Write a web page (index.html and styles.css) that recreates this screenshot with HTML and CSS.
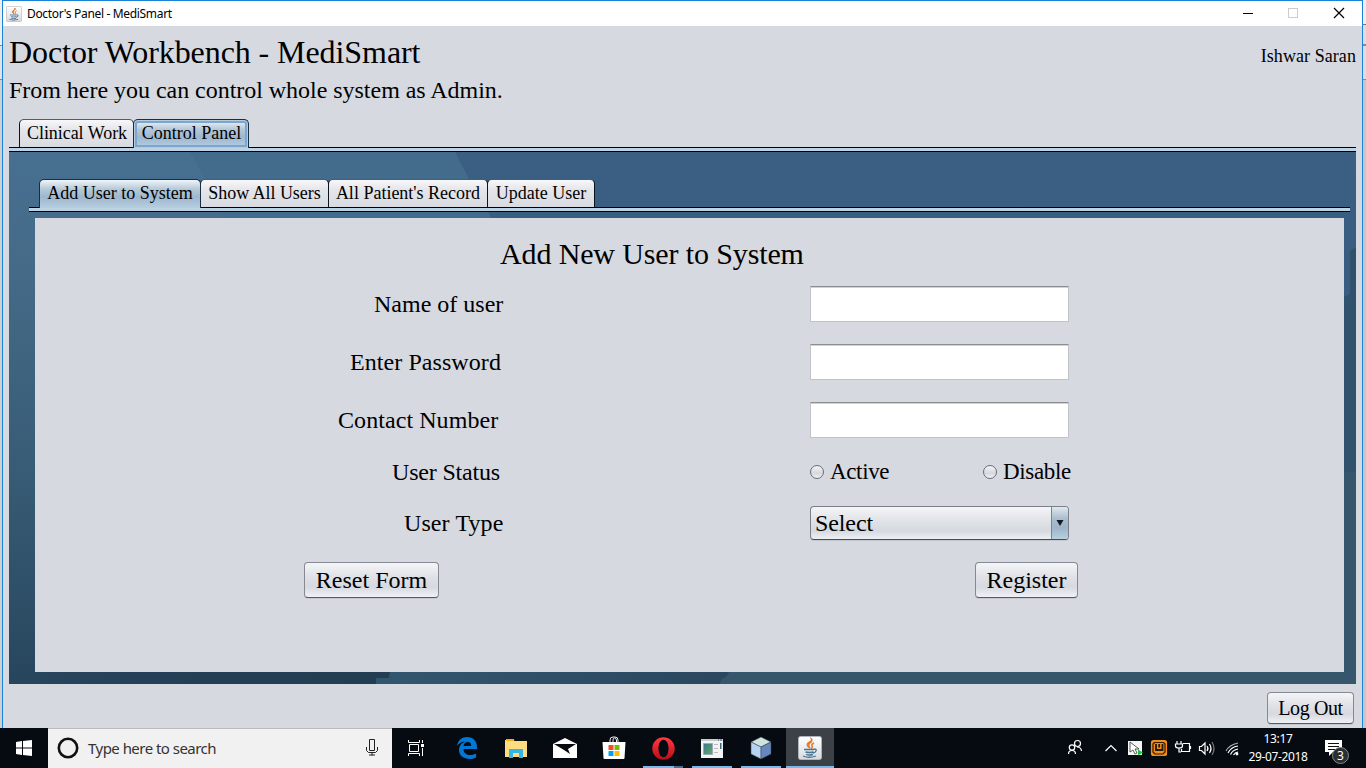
FILE: index.html
```html
<!DOCTYPE html>
<html lang="en">
<head>
<meta charset="utf-8">
<title>Doctor's Panel - MediSmart</title>
<link rel="stylesheet" href="styles.css">
</head>
<body>
<div class="screen">
  <div class="desk">
    <div class="edge edge-left"></div>
    <div class="window">
      <header class="titlebar">
        <svg class="app-icon" viewBox="0 0 24 24"><use href="#java"/></svg>
        <span class="caption">Doctor's Panel - MediSmart</span>
        <svg class="controls" width="110" height="24" viewBox="0 0 110 24" fill="none" shape-rendering="crispEdges"><path d="M1 12.500h10" stroke="#000"/><path d="M46.500 7.500h9v9h-9z" stroke="#ccc"/><path d="M92 7l10 10M102 7l-10 10" stroke="#000" stroke-width="1.200" shape-rendering="auto"/></svg>
      </header>
      <div class="heading">
        <div><h1>Doctor Workbench - MediSmart</h1><p>From here you can control whole system as Admin.</p></div>
        <span class="user">Ishwar Saran</span>
      </div>
      <nav class="tabs outer">
        <span class="tab clinical">Clinical Work</span><span class="tab selected focused control">Control Panel</span>
      </nav>
      <main class="panel">
        <svg class="shapes" width="1347" height="532" viewBox="0 0 1347 532"><defs><linearGradient id="left" x1="0" y1="0" x2="0" y2="1"><stop stop-color="#476f90"/><stop offset=".2" stop-color="#456b89"/><stop offset=".6" stop-color="#385c75"/><stop offset="1" stop-color="#27465d"/></linearGradient><linearGradient id="base"><stop stop-color="#27465d"/><stop offset=".5" stop-color="#243e56"/><stop offset="1" stop-color="#233d52"/></linearGradient><linearGradient id="mid"><stop stop-color="#33566f"/><stop offset="1" stop-color="#2a475f"/></linearGradient></defs>
        <path d="M0 0H446Q458 26 476 54L482 66H30V532H0z" fill="url(#left)"/><path d="M181 0Q200 30 215 66H482Q458 30 446 0z" fill="#436b8b"/><path d="M0 520H381l-1 6h-13v6H0z" fill="url(#base)"/><path d="M381 520H720q-2 6-5 6t-4 6H367v-6h13z" fill="url(#mid)"/><path d="M720 520H1347v12H711q1-5 4-6t5-6z" fill="#36566b"/><path d="M1335 145l6-3v-43l6-4v437h-12z" fill="#31526c"/><path d="M1335 320h12v212h-12z" fill="#35566c"/></svg>
        <nav class="tabs inner">
          <span class="tab selected add">Add User to System</span><span class="tab show">Show All Users</span><span class="tab record">All Patient's Record</span><span class="tab update">Update User</span>
        </nav>
        <form class="form">
          <h2>Add New User to System</h2>
          <div class="row"><label class="l-name">Name of user</label><span class="field"></span></div>
          <div class="row"><label class="l-pass">Enter Password</label><span class="field"></span></div>
          <div class="row"><label class="l-contact">Contact Number</label><span class="field"></span></div>
          <div class="row status"><label class="l-status">User Status</label><div class="radios"><span class="radio"><i></i>Active</span><span class="radio"><i></i>Disable</span></div></div>
          <div class="row type"><label class="l-type">User Type</label><div class="select"><span>Select</span><b><svg width="8" height="8" viewBox="0 0 8 8"><path d="M.5 1h7L4 7z" fill="#17191d"/></svg></b></div></div>
          <div class="actions"><span class="button reset">Reset Form</span><span class="button register">Register</span></div>
        </form>
      </main>
      <footer><span class="button logout">Log Out</span></footer>
    </div>
    <div class="edge edge-right"></div>
  </div>
  <div class="taskbar">
    <div class="start"><svg width="16" height="16" viewBox="0 0 16 16"><path d="M0 2l6-1v6.500H0zM7 1l9-1v7.500H7zM0 8.500h6V15l-6-1zM7 8.500h9V16l-9-1z" fill="#fff"/></svg></div>
    <div class="search">
      <svg width="22" height="22" viewBox="0 0 22 22"><circle cx="11" cy="11" r="9.200" fill="none" stroke="#111" stroke-width="2.600"/></svg>
      <span>Type here to search</span>
      <svg class="mic" width="12" height="17" viewBox="0 0 12 17" fill="none" stroke="#222"><path d="M3.500.5h5v11h-5zM.5 8v3.500l2 2h7l2-2V8M6 13.500v3M3 16h6"/></svg>
    </div>
    <div class="task view"><svg width="18" height="18" viewBox="0 0 18 18" fill="none" stroke="#fff"><path d="M2.500 5.500h9v7h-9zM1.500 1v2.500h11V1M1.500 17v-2.500h11V17M15.500 1v3M15.500 9v8"/><path d="M14 5h3v3h-3z" fill="#fff" stroke="none"/></svg></div>
    <div class="task"><svg width="22" height="22" viewBox="0 0 22 22"><path d="M1 9C2 3 6 0 11 0c6 0 10 4 10 10v2H7.500c0 4 3 6 7 6 2 0 4-.6 5.500-1.500v4C18 21.500 16 22 13.500 22 7.500 22 3 18.500 3 13c0-4 2.500-7 6-8.500C6 4.500 3 6 1 9zm6.500 0h7.700c0-2.500-1.200-4-3.500-4S8 6.500 7.500 9z" fill="#0078d7"/></svg></div>
    <div class="task"><svg width="22" height="19" viewBox="0 0 22 19"><path d="M0 1h8l2 1h12v16H0z" fill="#fedc80"/><path d="M1 0h8v2H1z" fill="#f1ae1d"/><path d="M4 10h14v9h-4v-5H8v5H4z" fill="#36b5e8"/></svg></div>
    <div class="task"><svg width="24" height="20" viewBox="0 0 24 20"><path d="M0 6l12-6 12 6v14H0z" fill="#fff"/><path d="M1 6h22l-8 5 2 5-6-4z" fill="#060b12"/></svg></div>
    <div class="task"><svg width="24" height="24" viewBox="0 0 24 24"><path d="M8 7V4q0-3 3-3h2q3 0 3 3v3M11 6V4q0-2 1.500-2t2 2v2" fill="none" stroke="#eee"/><path d="M.5 6h23l-1 16q0 1-1 1h-19q-1 0-1-1z" fill="#fff"/><path d="M6.500 9h5v5h-5z" fill="#f25022"/><path d="M12.500 9h5v5h-5z" fill="#7fba00"/><path d="M6.500 15h5v5h-5z" fill="#00a4ef"/><path d="M12.500 15h5v5h-5z" fill="#ffb900"/></svg></div>
    <div class="task running opera"><svg width="23" height="23" viewBox="0 0 23 23"><defs><linearGradient id="op" x1="0" y1="0" x2="0" y2="1"><stop stop-color="#ff3a43"/><stop offset="1" stop-color="#b80d19"/></linearGradient></defs><path fill="url(#op)" fill-rule="evenodd" d="M11.500.3a11.200 11.200 0 1 0 0 22.400 11.200 11.200 0 0 0 0-22.400zm0 2.500c3 0 5 3.700 5 8.700s-2 8.700-5 8.700-5-3.700-5-8.700 2-8.700 5-8.700z"/></svg></div>
    <div class="task running"><svg width="22" height="19" viewBox="0 0 22 19"><defs><linearGradient id="gr" x1="0" y1="0" x2="1" y2="1"><stop stop-color="#3c7793"/><stop offset="1" stop-color="#60ab5d"/></linearGradient></defs><path d="M0 0h22v19H0z" fill="#f3f3f3"/><path d="M0 0h22v2H0z" fill="#c5cbd1"/><path d="M17 1h1m1 0h2" stroke="#456"/><path d="M2.500 4.500h9v11h-9z" fill="url(#gr)" stroke="#9ab"/><path d="M13 5.500h4m-4 4h4m-4 4h4" stroke="#bbb"/><path d="M19 4h1.500v6H19z" fill="#386d86"/></svg></div>
    <div class="task running"><svg width="22" height="23" viewBox="0 0 22 23" stroke="#345" stroke-width=".5"><path d="M1 5l10-5 10 5-10 5z" fill="#cfe4df"/><path d="M1 5l10 5v12L1 17z" fill="#b7d3f0"/><path d="M21 5l-10 5v12l10-5z" fill="#6688bd"/></svg></div>
    <div class="task running active"><svg width="24" height="24" viewBox="0 0 24 24"><defs><linearGradient id="jg" x1="0" y1="0" x2="0" y2="1"><stop stop-color="#fff"/><stop offset="1" stop-color="#d7dade"/></linearGradient></defs><g id="java"><rect x=".5" y=".5" width="23" height="23" rx="2" fill="url(#jg)" stroke="#aeb5bc"/><path d="M13.500 3q1 2-1.500 4t0 5q-5-3-1-5.500T13.500 3zM16 7q-3 1.500-2 3t-1 3" fill="none" stroke="#e77b2c" stroke-width="1.500"/><path d="M6 13.500h10M7.500 16q4 1 8 0M16 13q3 0 2 2t-3 2M8 18.500q3 1 7 0M5 20q6 2.500 13 0" fill="none" stroke="#487493" stroke-width="1.300"/></g></svg></div>
    <div class="tray">
      <svg width="180" height="40" viewBox="1065 728 180 40" fill="none" stroke="#fff" stroke-width="1.200"><circle cx="1077.500" cy="743.500" r="3"/><circle cx="1072" cy="747.500" r="2.700"/><path d="M1068.500 754q0-3.500 3.500-3.500t3.500 3.500M1077 747q4 0 4.500 4M1105.500 751l5.500-5.500 5.500 5.500"/>
      <rect x="1128" y="741" width="14" height="14" fill="#f5f5f5" stroke="none"/><path d="M1130 742l9 7-4 0 2 4-2 1-2-4-3 2z" fill="#fff" stroke="#333" stroke-width=".8"/><path d="M1138 749.500l5 3-5 3z" fill="#16c637" stroke="none"/>
      <rect x="1151.500" y="740.500" width="15" height="15" rx="2" fill="#f28b18" stroke="#f58c16"/><path d="M1154.500 742.500h9l1.500 1.500v8l-2 2h-8l-2-2v-8z" stroke="#301b04"/><path d="M1156 744v6h6.500v-6M1159.200 744v3.500" stroke="#241808" stroke-width="1.800"/>
      <path d="M1183 743.500h6.500v8h-8V749M1190.500 746v3M1177 741v3M1181 741v3M1175.500 744h7v2q0 2-3.500 2t-3.500-2zM1179 748v4h2"/>
      <path d="M1199.500 746.500h2l3.500-3.500v11l-3.500-3.500h-2zM1207 746q2 2.500 0 5M1209.500 744q3 4.500 0 9"/><path d="M1212 742q4 6.500 0 13" stroke="#777"/>
      <path d="M1226 751q3-6 12-8" stroke="#aaa"/><path d="M1228 753q3-6 10-7M1230.500 754.500q2-4.500 7.500-5.500M1233.500 755q1.500-2.500 4.500-3"/><circle cx="1237" cy="754" r="1.400" fill="#fff" stroke="none"/></svg>
      <div class="clock"><span>13:17</span><span>29-07-2018</span></div>
      <div class="notice"><svg width="17" height="16" viewBox="0 0 17 16"><path d="M0 0h17v12H8l-4 4v-4H0z" fill="#fff"/><path d="M3 3.500h11M3 6.500h11M3 9.500h8" stroke="#111"/></svg><span class="badge">3</span></div>
    </div>
  </div>
</div>
</body>
</html>
```
FILE: styles.css
```css
*, *::after { box-sizing: border-box; }
body { margin: 0; }
.screen { width: 1366px; height: 768px; overflow: hidden; background: #d6d9e0; font-family: "Liberation Serif", "Times New Roman", serif; color: #000; }
.desk { display: flex; height: 728px; }
.edge-left { width: 2px; background: linear-gradient(#eee 45px, #888 45px 46px, #e2e2e2 46px 79px, #888 79px 80px, #d0d0d0 80px); }
.edge-right { width: 3px; background: linear-gradient(#eee 24px, #777 24px 25px, #ddd 25px 44px, #888 44px 46px, #ddd 46px 79px, #888 79px 80px, #c6c6c6 80px); }
.window { width: 1361px; border: 1px solid #1883d7; border-bottom: 0; background: #d6d9e0; }
.titlebar { display: flex; align-items: center; height: 25px; padding-left: 3px; background: #fff; font: 12px "Noto Sans", sans-serif; }
.app-icon { width: 16px; height: 16px; }
.caption { margin-left: 5px; letter-spacing: -.33px; }
.controls { margin-left: auto; margin-right: 10px; position: relative; top: -1px; }
.heading { display: flex; justify-content: space-between; height: 93px; padding: 9px 6px 0; }
h1, h2, p { margin: 0; font-weight: 400; white-space: nowrap; }
h1 { font-size: 32px; line-height: 34px; letter-spacing: -.08px; }
p { margin-top: 8px; font-size: 24px; line-height: 27px; letter-spacing: -.03px; }
.user { padding-top: 11px; font-size: 18px; line-height: 21px; letter-spacing: .07px; }
.tabs { display: flex; align-items: flex-start; position: relative; font-size: 18px; line-height: 26px; }
.tabs::after { content: ""; position: absolute; z-index: 1; left: 0; right: 0; bottom: 0; height: 5px; border-top: 1px solid #000; border-bottom: 1px solid #000; background: #bdd3e3; }
.outer { height: 33px; margin: 0 6px; padding-left: 10px; }
.tab { height: 29px; text-align: center; white-space: nowrap; border: 1px solid #555b64; border-left-color: #0b1521; border-right-color: #0b1521; border-radius: 5px 5px 0 0; background: linear-gradient(#f8f8fa, #e5e6ea 35%, #d8dbe1); }
.tab + .tab { margin-left: -1px; }
.selected { position: relative; z-index: 2; border-bottom: 0; border-color: #1b2e3f; background: linear-gradient(#f0f6fa, #b7c9d8 32%, #9fb7ce 60%, #b6cee0); }
.focused { box-shadow: inset 0 0 0 1px #b8cbda, inset 0 0 0 3px #7ba6d2; }
.clinical { width: 115px; letter-spacing: -.05px; padding-left: 1px; }
.control { width: 116px; padding-left: 1px; }
.panel { position: relative; width: 1347px; height: 532px; margin-left: 6px; padding: 27px 6px 12px 20px; background: linear-gradient(#3a5f82, #385c7f 45%, #31536e); }
.shapes { position: absolute; left: 0; top: 0; }
.inner { height: 33px; padding-left: 10px; line-height: 27px; }
.add { width: 162px; }
.show { width: 129px; letter-spacing: -.05px; }
.record { width: 160px; }
.update { width: 108px; }
.form { position: relative; width: 1309px; height: 454px; margin: 6px 0 0 6px; padding: 18px 0 0; background: #d6d9e0; font-size: 24px; }
h2 { padding-left: 465px; font-size: 30px; line-height: 35px; letter-spacing: -.13px; }
.row { display: flex; align-items: center; height: 36px; margin-bottom: 22px; padding-left: 303px; line-height: 28px; }
h2 + .row { margin-top: 15px; }
.row label { width: 472px; white-space: nowrap; }
.l-name { padding-left: 36px; }
.l-pass { padding-left: 12px; letter-spacing: .07px; }
.l-contact { letter-spacing: .07px; }
.l-status { padding-left: 54px; letter-spacing: -.18px; }
.l-type { padding-left: 66px; letter-spacing: .1px; }
.field { width: 259px; height: 36px; border: 1px solid #c0c3c9; border-top-color: #8c8e92; background: #fff; box-shadow: inset 0 1px #d0d2d5; }
.status { height: 28px; margin-top: -2px; }
.radios { display: flex; font-size: 23px; letter-spacing: -.35px; }
.radio { display: flex; align-items: center; width: 173px; }
.radio i { width: 14px; height: 14px; margin-right: 6px; border: 1px solid #686c74; border-radius: 50%; background: linear-gradient(#f4f5f7, #d5d8de 60%, #f0f2f5); }
.type { height: 34px; margin-top: -2px; }
.select { display: flex; justify-content: space-between; width: 259px; height: 34px; border: 1px solid #7a7f88; border-bottom-color: #434c57; border-radius: 4px; overflow: hidden; background: linear-gradient(#f5f5f8, #e0e2e7 45%, #d6d9df 75%, #eceff4); padding-left: 4px; line-height: 33px; letter-spacing: -.1px; box-shadow: 0 1px #c3c7ce; }
.select b { display: flex; align-items: center; justify-content: center; width: 17px; border-left: 1px solid #6e889d; background: linear-gradient(#dfe8ef, #abbfcf 35%, #9db4ca 65%, #b9d0df); }
.actions { display: flex; justify-content: space-between; width: 774px; margin-left: 269px; }
.button { display: block; border: 1px solid #858a92; border-bottom-color: #555b64; border-radius: 4px; text-align: center; background: linear-gradient(#f5f5f8, #e0e2e7 40%, #d6d9df 70%, #eff1f6); box-shadow: 0 1px #c5c8cf; }
.actions .button { height: 36px; line-height: 35px; }
.reset { width: 135px; }
.register { width: 103px; }
footer { display: flex; justify-content: flex-end; padding: 8px 8px 0 0; font-size: 20px; letter-spacing: -.4px; }
.logout { width: 87px; height: 32px; line-height: 31px; }
.taskbar { display: flex; height: 40px; background: #060b12; }
.start { display: flex; align-items: center; justify-content: center; width: 48px; }
.search { display: flex; align-items: center; width: 344px; padding: 0 14px 2px 9px; border-top: 1px solid #bbb; background: #f1f1f1; color: #333; font: 15px "Noto Sans", sans-serif; letter-spacing: -.53px; }
.search span { margin-left: 9px; }
.mic { margin-left: auto; }
.task { display: flex; align-items: center; justify-content: center; width: 48px; margin-right: 1px; }
.view { margin-right: 3px; }
.running { background: linear-gradient(#76b9ed, #76b9ed) center bottom / 40px 2px no-repeat; }
.opera { background: linear-gradient(90deg, #76b9ed 31px, #466f90 31px) center bottom / 40px 2px no-repeat; }
.active { background-size: 48px 2px; background-color: #3c4148; }
.tray { display: flex; margin-left: auto; color: #fff; font: 12px/18px "Noto Sans", sans-serif; }
.clock { display: flex; flex-direction: column; width: 66px; padding-top: 2px; text-align: center; letter-spacing: -.35px; }
.notice { position: relative; width: 55px; padding: 12px 0 0 14px; }
.badge { position: absolute; left: 21px; top: 19px; width: 17px; height: 17px; border: 1px solid #888; border-radius: 50%; background: #2b2e33; line-height: 15px; text-align: center; }
```
